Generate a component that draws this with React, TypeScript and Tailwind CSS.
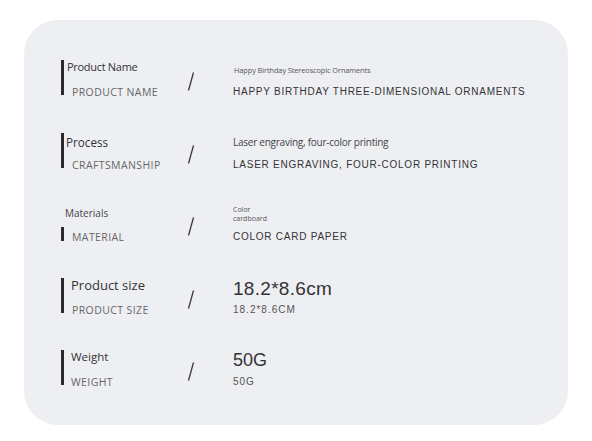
import React from 'react';

const Slash = () => (
  <svg width="8" height="19" viewBox="0 0 8 19" className="mt-[12px]">
    <line x1="6.5" y1="0.5" x2="1.5" y2="18.5" stroke="#3a3a3a" strokeWidth="1.3" />
  </svg>
);

type Spec = {
  title: string;
  titleCls: string;
  sub: string;
  subCls: string;
  barCls: string;
  value: React.ReactNode;
  valueSub: string;
};

const arial = { fontFamily: '"Liberation Sans", Arial, sans-serif' };

const specs: Spec[] = [
  {
    title: 'Product Name',
    titleCls: 'pl-[3px] text-[11px] leading-[14px] tracking-[-0.3px]',
    sub: 'PRODUCT NAME',
    subCls: 'pl-[8px]',
    barCls: 'h-[35px]',
    value: (
      <div className="pl-[1px] text-[7.4px] leading-[20px] text-[#555] tracking-[-0.1px]">
        Happy Birthday Stereoscopic Ornaments
      </div>
    ),
    valueSub: 'HAPPY BIRTHDAY THREE-DIMENSIONAL ORNAMENTS',
  },
  {
    title: 'Process',
    titleCls: 'pl-[2px] text-[11.7px] leading-[18px]',
    sub: 'CRAFTSMANSHIP',
    subCls: 'pl-[8px]',
    barCls: 'h-[35px]',
    value: (
      <div className="text-[10px] leading-[18px] text-[#444] tracking-[-0.25px]">
        Laser engraving, four-color printing
      </div>
    ),
    valueSub: 'LASER ENGRAVING, FOUR-COLOR PRINTING',
  },
  {
    title: 'Materials',
    titleCls: 'pl-[1px] text-[10px] leading-[16px] text-[#444]',
    sub: 'MATERIAL',
    subCls: 'pl-[8px]',
    barCls: 'h-[14px] self-end mb-[-1px]',
    value: (
      <div className="text-[7px] leading-[9px] text-[#555]">
        <div>Color</div>
        <div>cardboard</div>
      </div>
    ),
    valueSub: 'COLOR CARD PAPER',
  },
  {
    title: 'Product size',
    titleCls: 'pl-[7px] text-[13px] leading-[14px]',
    sub: 'PRODUCT SIZE',
    subCls: 'pl-[8px]',
    barCls: 'h-[35px]',
    value: <div className="text-[19px] leading-[22px] text-[#333] tracking-[0.3px]" style={arial}>18.2*8.6cm</div>,
    valueSub: '18.2*8.6CM',
  },
  {
    title: 'Weight',
    titleCls: 'pl-[7px] text-[11.5px] leading-[14px]',
    sub: 'WEIGHT',
    subCls: 'pl-[7px]',
    barCls: 'h-[35px]',
    value: <div className="text-[18px] leading-[20px] text-[#333]" style={arial}>50G</div>,
    valueSub: '50G',
  },
];

const App = () => {
  return (
    <div className="w-[592px] h-[441px] bg-white pt-[20px] pl-[24px]" style={{ fontFamily: '"Open Sans", "Noto Sans", sans-serif' }}>
      <div className="w-[544px] h-[405px] rounded-[34px] bg-[#eeeff3] pt-[40px] pl-[37px] flex flex-col gap-[37.5px]">
        {specs.map((s, i) => (
          <div key={i} className="flex items-start h-[35px]">
            <div className="w-[126px] h-[35px] flex">
              <div className={`w-[3px] bg-[#2a2a2a] ${s.barCls}`} />
              <div className="flex flex-col justify-between h-[37px]">
                <div className={`text-[#333] ${s.titleCls}`}>{s.title}</div>
                <div className={`text-[10.5px] leading-[10px] text-[#666] tracking-[0.4px] ${s.subCls}`}>{s.sub}</div>
              </div>
            </div>
            <div className="w-[46px] h-[35px]">
              <Slash />
            </div>
            <div className="flex flex-col justify-between h-[37px]">
              {s.value}
              <div
                className={`${i >= 3 ? 'text-[10px] tracking-[1px] text-[#555]' : 'text-[10px] tracking-[0.75px] text-[#333]'} leading-[10px]`}
                style={arial}
              >
                {s.valueSub}
              </div>
            </div>
          </div>
        ))}
      </div>
    </div>
  );
};

export default App;
